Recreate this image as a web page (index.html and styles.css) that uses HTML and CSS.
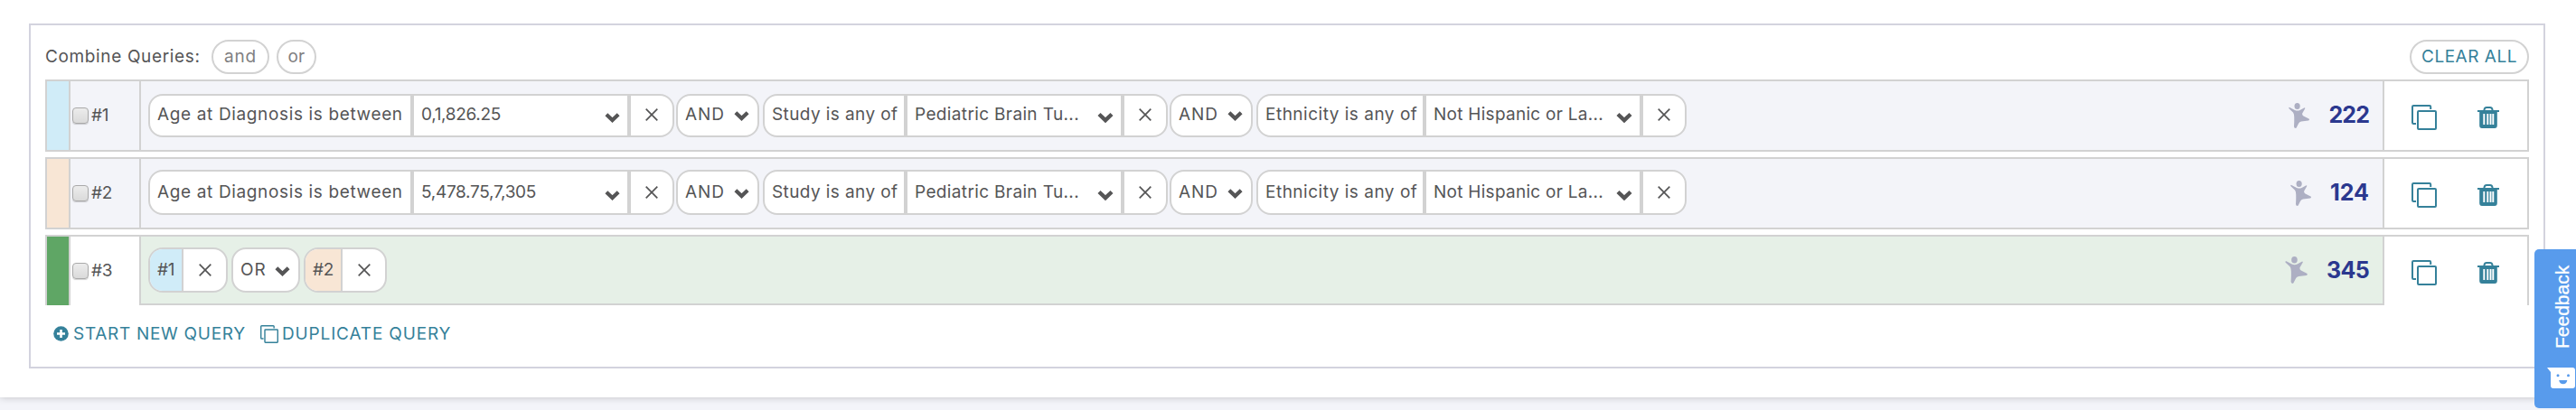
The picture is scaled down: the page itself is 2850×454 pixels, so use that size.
FILE: index.html
```html
<!DOCTYPE html>
<html lang="en">
<head>
<meta charset="utf-8">
<title>Query builder</title>
<link rel="stylesheet" href="styles.css">
</head>
<body>
<svg class="defs" width="0" height="0">
  <symbol id="chevron" viewBox="0 0 18 12"><path d="M2 2.5 9 9.2 16 2.5" fill="none" stroke="#555556" stroke-width="4.4"/></symbol>
  <symbol id="cross" viewBox="0 0 14 14"><path d="M.7.7 13.3 13.3M13.3.7.7 13.3" fill="none" stroke="#555556" stroke-width="1.7"/></symbol>
  <symbol id="copy" viewBox="0 0 28 28"><path d="M21.2 5V2.2Q21.2 1 20 1H2.2Q1 1 1 2.2V19.8Q1 21 2.2 21H5" fill="none" stroke="#35819a" stroke-width="2"/><rect x="7" y="7" width="20" height="20" rx="1" fill="none" stroke="#35819a" stroke-width="2"/></symbol>
  <symbol id="trash" viewBox="0 0 24 24"><path d="M7.5 5V3.4Q8 1 10 1H14Q16 1 16.5 3.4V5" fill="none" stroke="#35819a" stroke-width="2"/><path d="M0 4H24V6H21.8V21Q21.8 24 19 24H5Q2.2 24 2.2 21V6H0Z" fill="#35819a"/><path d="M7.3 8V20M11.3 8V20M14.5 8V20M17.3 8V20" stroke="#fff" stroke-width="1.9"/></symbol>
  <symbol id="person" viewBox="0 0 23 28"><ellipse cx="9.6" cy="3.5" rx="3.1" ry="3.5"/><path d="M.3 5.2Q0 6 1 6.8L5 10.5Q6.2 12 6.2 15Q6.4 20 6 26Q6 28 7.8 28Q8.8 27.8 9.4 26L11.2 22.5Q12 21 14 20.5L22 19.5Q23 19.2 23 18.5Q23 17.7 22 17.3L16.5 14.5Q14.8 13.5 15.2 11.5L18.2 6.2Q18.6 5.2 17.6 5.2L12.5 8Q9.8 9.2 7 8L1.3 5Q.6 4.6.3 5.2Z"/></symbol>
</svg>

<main class="page">
  <section class="panel">
    <header class="toolbar">
      <span class="toolbar-title">Combine Queries:</span>
      <button class="pill pill-and">and</button>
      <button class="pill pill-or">or</button>
      <button class="pill pill-clear">CLEAR ALL</button>
    </header>

    <div class="row row-first">
      <div class="swatch blue"></div>
      <label class="pick"><span class="check"></span><span class="tag tag1">#1</span></label>
      <div class="query">
        <div class="chip"><span class="name name-age">Age at Diagnosis is between</span><span class="field"><span class="v-a">0,1,826.25</span><svg class="chev"><use href="#chevron"/></svg></span><span class="close"><svg><use href="#cross"/></svg></span></div>
        <div class="op op-and"><span>AND</span><svg class="chev"><use href="#chevron"/></svg></div>
        <div class="chip"><span class="name name-study">Study is any of</span><span class="field wide-chev"><span class="v-c">Pediatric Brain Tu...</span><svg class="chev"><use href="#chevron"/></svg></span><span class="close"><svg><use href="#cross"/></svg></span></div>
        <div class="op op-and"><span>AND</span><svg class="chev"><use href="#chevron"/></svg></div>
        <div class="chip"><span class="name name-eth">Ethnicity is any of</span><span class="field wide-chev"><span class="v-d">Not Hispanic or La...</span><svg class="chev"><use href="#chevron"/></svg></span><span class="close"><svg><use href="#cross"/></svg></span></div>
        <div class="stat"><svg class="person"><use href="#person"/></svg><b class="count n222">222</b></div>
      </div>
      <div class="actions"><svg class="copy"><use href="#copy"/></svg><svg class="trash"><use href="#trash"/></svg></div>
    </div>

    <div class="row">
      <div class="swatch peach"></div>
      <label class="pick"><span class="check"></span><span class="tag tag2">#2</span></label>
      <div class="query">
        <div class="chip"><span class="name name-age">Age at Diagnosis is between</span><span class="field"><span class="v-b">5,478.75,7,305</span><svg class="chev"><use href="#chevron"/></svg></span><span class="close"><svg><use href="#cross"/></svg></span></div>
        <div class="op op-and"><span>AND</span><svg class="chev"><use href="#chevron"/></svg></div>
        <div class="chip"><span class="name name-study">Study is any of</span><span class="field wide-chev"><span class="v-c">Pediatric Brain Tu...</span><svg class="chev"><use href="#chevron"/></svg></span><span class="close"><svg><use href="#cross"/></svg></span></div>
        <div class="op op-and"><span>AND</span><svg class="chev"><use href="#chevron"/></svg></div>
        <div class="chip"><span class="name name-eth">Ethnicity is any of</span><span class="field wide-chev"><span class="v-d">Not Hispanic or La...</span><svg class="chev"><use href="#chevron"/></svg></span><span class="close"><svg><use href="#cross"/></svg></span></div>
        <div class="stat"><svg class="person"><use href="#person"/></svg><b class="count n124">124</b></div>
      </div>
      <div class="actions"><svg class="copy"><use href="#copy"/></svg><svg class="trash"><use href="#trash"/></svg></div>
    </div>

    <div class="row row-active">
      <div class="swatch green"></div>
      <label class="pick"><span class="check"></span><span class="tag tag2">#3</span></label>
      <div class="query">
        <div class="chip ref ref-blue"><span class="ref-name blue tag1">#1</span><span class="close"><svg><use href="#cross"/></svg></span></div>
        <div class="op op-or"><span>OR</span><svg class="chev"><use href="#chevron"/></svg></div>
        <div class="chip ref ref-peach"><span class="ref-name peach tag2">#2</span><span class="close"><svg><use href="#cross"/></svg></span></div>
        <div class="stat"><svg class="person"><use href="#person"/></svg><b class="count n345">345</b></div>
      </div>
      <div class="actions"><svg class="copy"><use href="#copy"/></svg><svg class="trash"><use href="#trash"/></svg></div>
    </div>

    <footer class="links">
      <a class="link link-new"><svg class="plus" viewBox="0 0 17 17"><circle cx="8.5" cy="8.5" r="8.3" fill="#35819a"/><path d="M8.5 4V13M4 8.5H13" stroke="#fff" stroke-width="2.6"/></svg><span>START NEW QUERY</span></a>
      <a class="link link-dup"><svg class="copy"><use href="#copy"/></svg><span>DUPLICATE QUERY</span></a>
    </footer>
  </section>
</main>

<aside class="feedback">
  <span class="feedback-label">Feedback</span>
  <svg class="smile" viewBox="0 0 32 24"><path d="M0 0H28Q31 0 31 3V20Q31 23 28 23H7Q4 23 4 20V5Z" fill="#fff"/><circle cx="12" cy="8.800" r="1.500" fill="#589bec"/><circle cx="23.500" cy="8.800" r="1.500" fill="#589bec"/><path d="M13.200 14H22.300Q21.500 18.300 17.800 18.300Q14 18.300 13.200 14Z" fill="#589bec"/></svg>
</aside>
</body>
</html>
```
FILE: styles.css
```css
* { box-sizing: border-box; }
body {
  margin: 0;
  height: 454px;
  overflow: hidden;
  background: #f3f4f9;
  color: #555556;
  font: 19px/42px Inter, "Open Sans", sans-serif;
  white-space: nowrap;
}
svg { display: block; flex: none; }
.defs { position: absolute; }
.page {
  height: 440px;
  padding: 26px 34px 0 32px;
  background: #fff;
  box-shadow: 0 0 8px rgba(0, 0, 0, .22);
}
.panel {
  height: 382px;
  padding: 16px 16px 0;
  border: 2px solid #d3d3de;
}

/* toolbar */
.toolbar { display: flex; height: 44px; }
.toolbar-title {
  width: 184px;
  line-height: 37px;
  letter-spacing: .64px;
}
.pill {
  height: 38px;
  padding: 0;
  border: 2px solid #d2d2d2;
  border-radius: 19px;
  background: #fff;
  color: #808081;
  font: inherit;
  line-height: 34px;
  text-align: center;
}
.pill-and { width: 64px; letter-spacing: .82px; }
.pill-or { width: 44px; margin-left: 8px; letter-spacing: .23px; }
.pill-clear {
  width: 132px;
  margin-left: auto;
  color: #35819a;
  letter-spacing: .52px;
}

/* query rows */
.row {
  display: grid;
  grid-template-columns: 26px 78px 1fr 160px;
  height: 80px;
  margin-bottom: 6px;
  border: 2px solid #d2d2d2;
  border-right: 0;
}
.row > div, .pick { border-right: 2px solid #d2d2d2; }
.blue { background: #d0ecf8; }
.peach { background: #f8e6d5; }
.green { background: #5fa665; }
.pick {
  display: flex;
  align-items: center;
  gap: 3px;
  padding: 0 0 1px 2px;
  background: #f3f4f9;
}
.check {
  width: 18px;
  height: 18px;
  border: 1.5px solid #a9a9a9;
  border-radius: 4px;
  background: linear-gradient(#ececec, #dadada);
  box-shadow: 0 1px 1px rgba(0, 0, 0, .18);
}
.tag1 { letter-spacing: -.38px; }
.tag2 { letter-spacing: -.31px; }
.query {
  display: flex;
  padding: 12px 15px 0 8px;
  background: #f3f4f9;
}
.chip, .op {
  display: flex;
  height: 50px;
  line-height: 46px;
  border: 2px solid #d2d2d2;
  border-radius: 16px;
  background: #fff;
  overflow: hidden;
}
.name { padding-left: 8px; letter-spacing: .5px; }
.name-age { width: 288px; letter-spacing: .64px; }
.name-study { width: 154px; letter-spacing: .4px; }
.name-eth { width: 182px; }
.field {
  display: flex;
  justify-content: space-between;
  width: 244px;
  padding: 0 8px;
  border: solid #d2d2d2;
  border-width: 0 4px;
}
.v-a { letter-spacing: -.32px; }
.v-b { letter-spacing: -.3px; }
.v-c { letter-spacing: .36px; }
.v-d { letter-spacing: .27px; }
.chev { width: 17px; height: 12px; margin-top: 20px; }
.wide-chev .chev { width: 18px; }
.close { width: 46px; padding: 16px 0 0 16px; }
.close svg { width: 14px; height: 14px; }
.op {
  justify-content: space-between;
  margin: 0 4px 0 2px;
  padding: 0 9px 0 8px;
  letter-spacing: .9px;
}
.op .chev { margin-top: 18px; }
.op-and { width: 92px; }
.op-or { width: 76px; margin-left: 4px; }

.row-first .query { padding-top: 14px; }
.row-first .chip, .row-first .op { height: 48px; line-height: 42px; }
.row-first .close { padding-top: 14px; }
.row-first .chev { margin-top: 18px; }
.row-first .op .chev { margin-top: 16px; }

.row-active { height: 78px; border-bottom: 0; }
.row-active .pick { background: #fff; }
.row-active .query {
  background: #e6f0e7;
  border-bottom: 2px solid #d2d2d2;
}
.ref-blue { width: 88px; }
.ref-peach { width: 92px; }
.ref-name {
  padding: 0 8px;
  border-right: 2px solid #d2d2d2;
  flex: 1;
}
.ref .close { width: 48px; padding-left: 17px; }

/* result counts */
.stat { display: flex; margin-left: auto; height: 48px; }
.row-first .stat { margin-top: -2px; }
.person { width: 23px; height: 28px; margin-top: 12px; fill: #adafc3; }
.row-active .person { width: 25px; height: 30px; margin-top: 10px; }
.count {
  margin-left: 21px;
  color: #2b388f;
  font-size: 25px;
  font-weight: 700;
  line-height: 50px;
}
.n222 { letter-spacing: -.9px; }
.n124 { letter-spacing: 0; }
.n345 { letter-spacing: -.7px; }

.actions { display: flex; padding: 26px 0 0 30px; }
.actions .copy { width: 28px; height: 28px; }
.actions .trash { width: 24px; height: 24px; margin: 2px 0 0 45px; }

/* footer links */
.links {
  display: flex;
  align-items: center;
  height: 51px;
  padding-left: 9px;
  color: #35819a;
}
.link { display: flex; align-items: center; }
.plus { width: 17px; height: 17px; margin-right: 5px; }
.link-new { width: 229px; letter-spacing: .7px; }
.link-dup { letter-spacing: .85px; }
.links .copy { width: 20px; height: 20px; margin-right: 4px; }

/* feedback tab pinned over the page edge */
.feedback {
  position: absolute;
  top: 276px;
  right: 0;
  width: 46px;
  height: 176px;
  padding: 15px 0 0 14px;
  border-radius: 5px 0 0 5px;
  background: #589bec;
}
.feedback-label {
  display: block;
  height: 95px;
  margin-left: 2px;
  color: #fff;
  font: 21px/30px "Liberation Sans", Arial, sans-serif;
  -webkit-text-stroke: .3px #fff;
  writing-mode: vertical-rl;
  transform: rotate(180deg);
  width: 30px;
}
.smile { width: 32px; height: 24px; margin-top: 21px; }
```
